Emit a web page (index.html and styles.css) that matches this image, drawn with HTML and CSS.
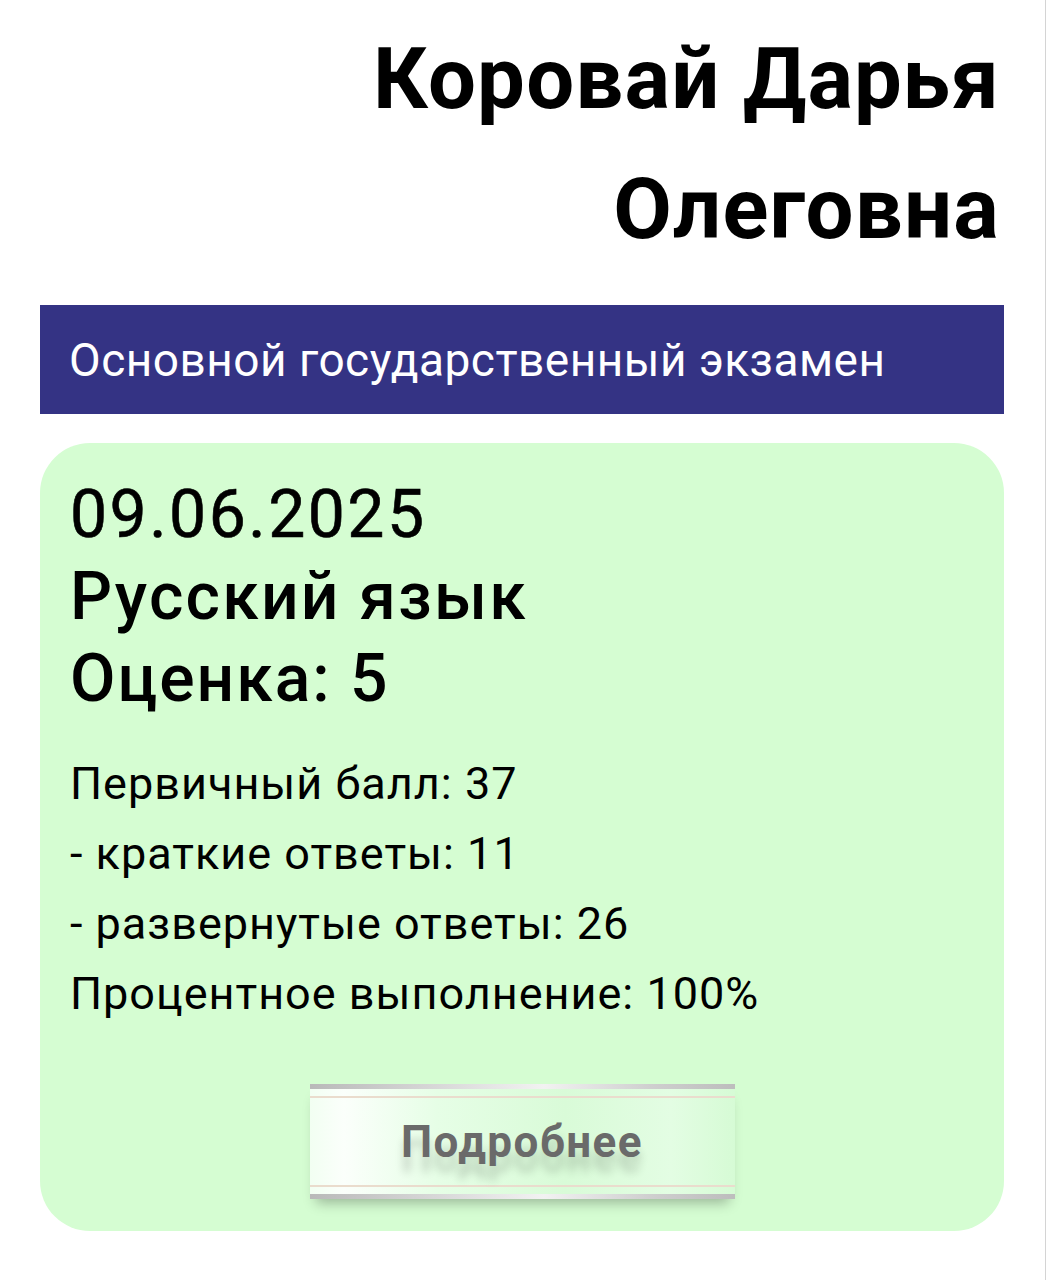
FILE: index.html
```html
<!DOCTYPE html>
<html lang="ru">
<head>
<meta charset="utf-8">
<title>Результаты ОГЭ</title>
<link rel="stylesheet" href="styles.css">
</head>
<body>
<main class="page">
  <h1 class="student">Коровай Дарья Олеговна</h1>
  <div class="exam-banner">Основной государственный экзамен</div>
  <section class="result-card">
    <div class="result-head">
      <div class="result-date">09.06.2025</div>
      <div class="result-subject">Русский язык</div>
      <div class="result-grade">Оценка: 5</div>
    </div>
    <div class="result-details">
      <div>Первичный балл: 37</div>
      <div>- краткие ответы: 11</div>
      <div>- развернутые ответы: 26</div>
      <div>Процентное выполнение: 100%</div>
    </div>
    <button class="more-btn" type="button">Подробнее</button>
  </section>
</main>
</body>
</html>
```

FILE: styles.css
```css
* { box-sizing: border-box; }
html { background: #fff; }
body {
  margin: 0;
  min-height: 1280px;
  font-family: Roboto, "Noto Sans", "Liberation Sans", sans-serif;
  color: #000;
  border-right: 1px solid #d4d4d4;
}
.page {
  padding: 14px 41px 0 40px;
  display: flex;
  flex-direction: column;
}
.student {
  margin: 0;
  width: 680px;
  align-self: flex-end;
  text-align: right;
  padding-right: 4px;
  font-size: 85px;
  line-height: 130px;
  font-weight: 700;
  letter-spacing: 1.2px;
}
.exam-banner {
  margin-top: 31px;
  height: 109px;
  background: #343384;
  color: #fff;
  display: flex;
  align-items: center;
  padding-left: 29px;
  font-size: 46px;
  letter-spacing: 0.5px;
  font-weight: 400;
}
.result-card {
  margin-top: 29px;
  background: #d5fdd2;
  border-radius: 50px;
  padding: 31px 30px 32px 30px;
  display: flex;
  flex-direction: column;
}
.result-head {
  font-size: 66px;
  line-height: 82px;
}
.result-date { font-weight: 400; letter-spacing: 2.5px; -webkit-text-stroke: 0.6px #000; }
.result-subject { font-weight: 500; letter-spacing: 2.2px; }
.result-grade { font-weight: 500; letter-spacing: 2px; }
.result-details {
  margin-top: 29px;
  font-size: 45px;
  line-height: 70px;
  font-weight: 400;
  letter-spacing: 1px;
}
.more-btn {
  margin-top: 55px;
  align-self: center;
  width: 425px;
  height: 115px;
  border: 0;
  padding: 0;
  font-family: Roboto, "Noto Sans", "Liberation Sans", sans-serif;
  font-size: 44px;
  font-weight: 700;
  letter-spacing: 1.5px;
  color: #6a6a6a;
  text-shadow: 0 15px 8px rgba(0,0,0,0.16);
  background:
    linear-gradient(to right, #b9b9b9, #d8d8d8 30%, #f2f2f2 55%, #cfcfcf 80%, #bdbdbd) top / 100% 5px no-repeat,
    linear-gradient(#eadccd, #eadccd) 0 12px / 100% 2px no-repeat,
    linear-gradient(#eadccd, #eadccd) 0 101px / 100% 2px no-repeat,
    linear-gradient(to right, #b9b9b9, #d8d8d8 30%, #f2f2f2 55%, #cfcfcf 80%, #bdbdbd) bottom / 100% 5px no-repeat,
    linear-gradient(to right, #f2fff2 0%, #fbfffb 8%, #e6fee6 30%, #d9fbd8 60%, #e3fde3 85%, #d6fbd5 100%);
  box-shadow: 0 10px 12px -6px rgba(0,0,0,0.28);
}
```
